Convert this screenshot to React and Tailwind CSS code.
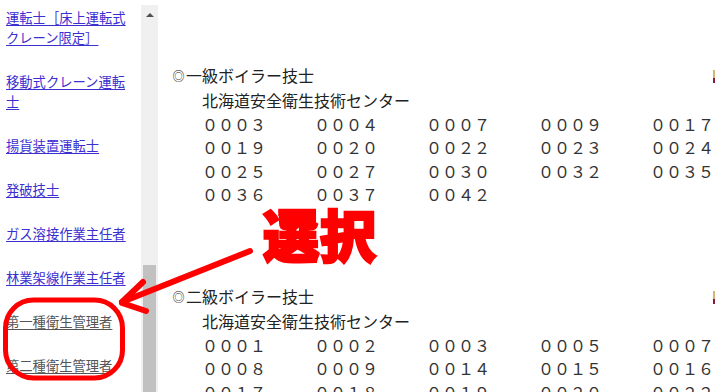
import React from "react";

const fw = (s) => s.replace(/[0-9]/g, (c) => String.fromCharCode(c.charCodeAt(0) + 0xfee0));

const links = [
  { lines: ["運転士［床上運転式", "クレーン限定］"], visited: false },
  { lines: ["移動式クレーン運転", "士"], visited: false },
  { lines: ["揚貨装置運転士"], visited: false },
  { lines: ["発破技士"], visited: false },
  { lines: ["ガス溶接作業主任者"], visited: false },
  { lines: ["林業架線作業主任者"], visited: false },
  { lines: ["第一種衛生管理者"], visited: true },
  { lines: ["第二種衛生管理者"], visited: true },
];

const blocks = [
  {
    mark: "◎",
    title: "一級ボイラー技士",
    org: "北海道安全衛生技術センター",
    nums: ["0003", "0004", "0007", "0009", "0017", "0019", "0020", "0022", "0023", "0024", "0025", "0027", "0030", "0032", "0035", "0036", "0037", "0042"],
    mt: "mt-[63px]",
  },
  {
    mark: "◎",
    title: "二級ボイラー技士",
    org: "北海道安全衛生技術センター",
    nums: ["0001", "0002", "0003", "0005", "0007", "0008", "0009", "0014", "0015", "0016", "0017", "0018", "0019", "0020", "0022"],
    mt: "mt-[78px]",
  },
];

function Block({ b }) {
  return (
    <section className={b.mt}>
      <div className="flex items-center h-[25px] leading-[25px] w-full">
        <span className="text-[12px] w-[13px] mr-[1px] text-center">{b.mark}</span>
        <span>{b.title}</span>
        <div className="ml-auto self-start mt-[7px] flex flex-col w-[2px]">
          <div className="h-[8px] bg-[#d9b47a]" />
          <div className="h-[5px] bg-[#8c1838]" />
        </div>
      </div>
      <div className="pl-[30px]">
        <div className="h-[25px] leading-[25px]">{b.org}</div>
        <div className="grid grid-cols-[repeat(5,112px)] leading-[23.3px] text-[#333]">
          {b.nums.map((n, i) => (
            <div key={i} className="whitespace-nowrap">{fw(n)}</div>
          ))}
        </div>
      </div>
    </section>
  );
}

export default function App() {
  return (
    <div className="relative w-[715px] h-[392px] overflow-hidden bg-white flex font-['Noto_Sans_CJK_JP','Noto_Sans',sans-serif]">
      <aside className="w-[141px] shrink-0 pl-[6px] pt-[8px] flex flex-col gap-[24px] text-[13.3px] leading-[20px]">
        {links.map((l, i) => (
          <a
            key={i}
            href="#"
            className={
              "block w-[128px] underline underline-offset-2 " +
              (l.visited ? "text-[#555555]" : "text-[#3b2fd0]")
            }
          >
            {l.lines.map((t, j) => (
              <div key={j} className="whitespace-nowrap">{t}</div>
            ))}
          </a>
        ))}
      </aside>

      <div className="w-[17px] shrink-0 mt-[5px] bg-[#f0f0f0] flex flex-col items-center">
        <div className="mt-[8px] w-0 h-0 border-l-[4px] border-r-[4px] border-b-[4px] border-l-transparent border-r-transparent border-b-[#505050]" />
        <div className="mt-auto w-[13px] h-[127px] bg-[#c1c1c1]" />
      </div>

      <main className="flex-1 min-w-0 pl-[14px] text-[16px] text-[#222]">
        {blocks.map((b, i) => (
          <Block key={i} b={b} />
        ))}
      </main>

      <span className="absolute left-[263px] top-[205px] text-[56px] leading-[56px] font-black text-[#ff0000] [-webkit-text-stroke:2.5px_#ff0000] tracking-[1px] pointer-events-none">
        選択
      </span>

      <svg className="absolute left-0 top-0 pointer-events-none" width="715" height="392" viewBox="0 0 715 392">
        <g stroke="#ff0000" strokeWidth="6" strokeLinecap="round" fill="none">
          <line x1="250" y1="251" x2="122" y2="302" />
          <line x1="122" y1="302" x2="143" y2="282" />
          <line x1="122" y1="303" x2="146" y2="311" />
        </g>
        <rect x="5.5" y="300" width="117" height="78" rx="28" ry="28" stroke="#ff0000" strokeWidth="5" fill="none" />
      </svg>
    </div>
  );
}
